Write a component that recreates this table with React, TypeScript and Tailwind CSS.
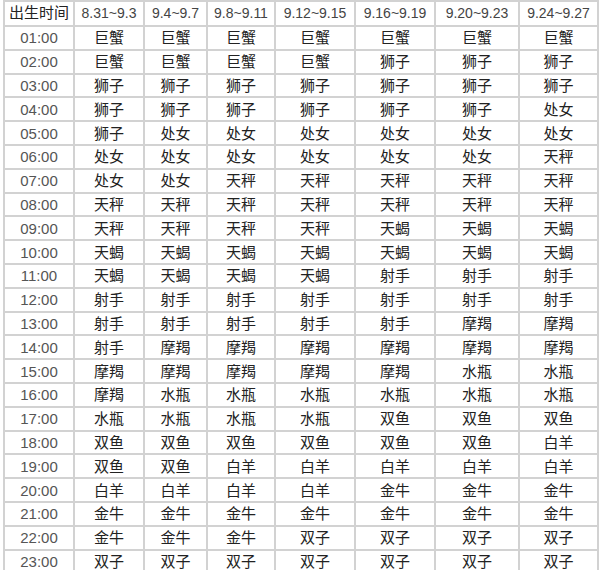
const ranges = [
  "8.31~9.3",
  "9.4~9.7",
  "9.8~9.11",
  "9.12~9.15",
  "9.16~9.19",
  "9.20~9.23",
  "9.24~9.27",
];

// column widths in px, first is the time column
const widths = ["w-[70px]", "w-[70px]", "w-[63px]", "w-[68px]", "w-[80px]", "w-[80px]", "w-[84px]", "w-[79px]"];

// each row: time, then sign for every date range (count shorthand)
const rows: [string, [string, number][]][] = [
  ["01:00", [["巨蟹", 7]]],
  ["02:00", [["巨蟹", 4], ["狮子", 3]]],
  ["03:00", [["狮子", 7]]],
  ["04:00", [["狮子", 6], ["处女", 1]]],
  ["05:00", [["狮子", 1], ["处女", 6]]],
  ["06:00", [["处女", 6], ["天秤", 1]]],
  ["07:00", [["处女", 2], ["天秤", 5]]],
  ["08:00", [["天秤", 7]]],
  ["09:00", [["天秤", 4], ["天蝎", 3]]],
  ["10:00", [["天蝎", 7]]],
  ["11:00", [["天蝎", 4], ["射手", 3]]],
  ["12:00", [["射手", 7]]],
  ["13:00", [["射手", 5], ["摩羯", 2]]],
  ["14:00", [["射手", 1], ["摩羯", 6]]],
  ["15:00", [["摩羯", 5], ["水瓶", 2]]],
  ["16:00", [["摩羯", 1], ["水瓶", 6]]],
  ["17:00", [["水瓶", 4], ["双鱼", 3]]],
  ["18:00", [["双鱼", 6], ["白羊", 1]]],
  ["19:00", [["双鱼", 2], ["白羊", 5]]],
  ["20:00", [["白羊", 4], ["金牛", 3]]],
  ["21:00", [["金牛", 7]]],
  ["22:00", [["金牛", 3], ["双子", 4]]],
  ["23:00", [["双子", 7]]],
];

function expand(parts: [string, number][]) {
  const out: string[] = [];
  parts.forEach(([name, n]) => {
    for (let i = 0; i < n; i++) out.push(name);
  });
  return out;
}

const cjk = "font-['Liberation_Sans','Noto_Sans_CJK_SC',sans-serif]";

export default function App() {
  return (
    <div className="w-[600px] h-[570px] overflow-hidden bg-white pl-[3px]">
      <table className={`border-collapse table-fixed w-[594px] text-[#333] ${cjk}`}>
        <colgroup>
          {widths.map((w, i) => (
            <col key={i} className={w} />
          ))}
        </colgroup>
        <thead>
          <tr>
            <th className="h-[25px] p-0 border-2 border-[#d2d2d2] text-[15px] font-normal text-[#222] whitespace-nowrap">
              出生时间
            </th>
            {ranges.map(r => (
              <th
                key={r}
                className="h-[25px] p-0 border-2 border-[#d2d2d2] text-[14px] font-normal text-[#444] whitespace-nowrap"
              >
                {r}
              </th>
            ))}
          </tr>
        </thead>
        <tbody>
          {rows.map(([time, parts]) => (
            <tr key={time}>
              <td className="h-[23.8px] p-0 border-2 border-[#d2d2d2] text-center text-[15px] leading-none text-[#555]">
                {time}
              </td>
              {expand(parts).map((sign, i) => (
                <td
                  key={i}
                  className="h-[23.8px] p-0 border-2 border-[#d2d2d2] text-center text-[15px] leading-none text-[#222]"
                >
                  {sign}
                </td>
              ))}
            </tr>
          ))}
        </tbody>
      </table>
    </div>
  );
}
